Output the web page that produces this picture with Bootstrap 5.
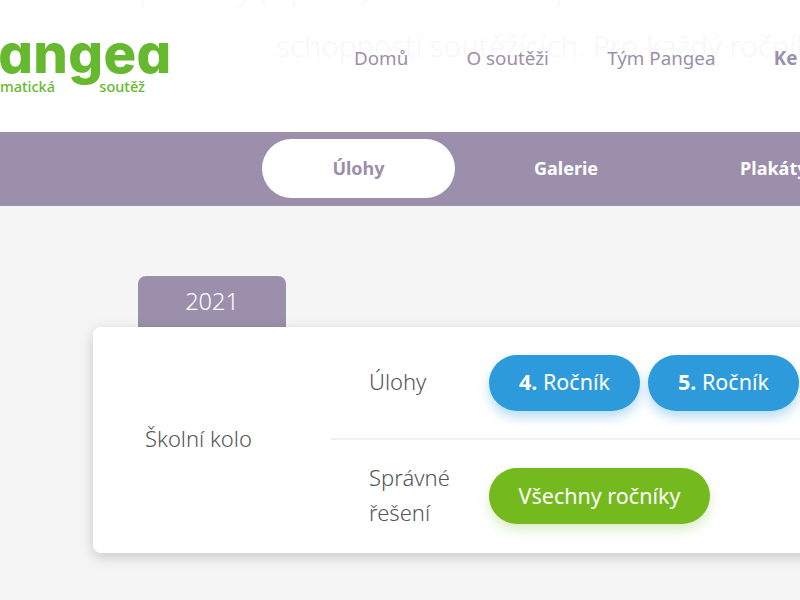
<!DOCTYPE html>
<html lang="cs">
<head>
<meta charset="utf-8">
<title>Pangea</title>
<link href="https://cdn.jsdelivr.net/npm/bootstrap@5.3.0/dist/css/bootstrap.min.css" rel="stylesheet">
<style>
html,body{height:600px;overflow:hidden}
body{background:#f5f5f6;font-family:"Noto Sans","Open Sans",sans-serif;color:#555}
.top-strip{height:131.5px;background:#fff;position:relative;overflow:hidden}
.ghost-line{position:absolute;white-space:nowrap;color:#f7f7f9;font-size:29.5px;font-weight:300;font-family:"Noto Sans",sans-serif}
.ghost-a{left:276px;top:24px}
.ghost-b{left:140px;top:-33px}
.logo-box{position:relative;margin-left:-37px;width:208px;flex:none;height:120px}
.logo-word{position:absolute;top:16px;left:0;font-family:Inter,sans-serif;font-feature-settings:"cv11";font-weight:800;font-size:54.5px;line-height:74px;color:#66b82f;letter-spacing:.3px}
.logo-sub{position:absolute;top:77px;left:37px;width:145px;display:flex;justify-content:space-between;font-size:14.5px;line-height:18px;font-weight:500;color:#66b82f;white-space:nowrap}
.menu-link{color:#9b8fab;font-size:18.8px;line-height:24px;text-decoration:none;white-space:nowrap}
.menu-strong{font-weight:700}
.menu-row{position:relative;z-index:1;gap:58.3px;padding-left:183px;padding-top:46px}
.purple-bar{height:74px;background:#9b8fab;padding-left:262px;gap:79px;white-space:nowrap}
.bar-pill{flex:none;width:193px;height:59px;background:#fff;color:#9b8fab;border-radius:30px;font-weight:700;font-size:18px;text-decoration:none}
.bar-link{color:#fff;font-weight:700;font-size:18px;text-decoration:none}
.bar-far{margin-left:63px}
.year-tab{width:148px;height:51px;margin-left:138px;margin-top:70.5px;background:#9b8fab;color:#fff;border-radius:8px 8px 0 0;font-size:23.5px;font-weight:300}
.panel-box{margin-left:93px;width:780px;height:226px;background:#fff;border-radius:8px;box-shadow:0 4px 14px rgba(0,0,0,.18);position:relative}
.kolo-cell{width:238px;padding-left:52px;padding-bottom:3px;font-size:22px;font-weight:300;flex:none}
.row-a{height:113px;border-bottom:2px solid #f1f1f2}
.row-b{height:113px;padding-bottom:1px}
.label-cell{width:158px;padding-left:38px;padding-bottom:2px;font-size:22px;font-weight:300;line-height:35px;flex:none}
.pill{height:56px;border-radius:28px;color:#fff;font-size:21.5px;white-space:nowrap;text-decoration:none}
.pill-blue{background:#2d9adb;box-shadow:0 6px 12px rgba(45,154,219,.35);width:151px}
.pill-green{background:#74ba1e;box-shadow:0 6px 12px rgba(116,186,30,.25);width:221px}
</style>
</head>
<body>
<header class="top-strip">
  <div class="ghost-line ghost-b">pro žáky (lepších) a soutěžících je zaměřena</div>
  <div class="ghost-line ghost-a">schopnosti soutěžících. Pro každý ročník</div>
  <div class="d-flex">
    <div class="logo-box">
      <div class="logo-word">Pangea</div>
      <div class="logo-sub"><span>matická</span><span>soutěž</span></div>
    </div>
    <nav class="menu-row d-flex">
      <a class="menu-link" href="#">Domů</a>
      <a class="menu-link" href="#">O soutěži</a>
      <a class="menu-link" href="#">Tým Pangea</a>
      <a class="menu-link menu-strong" href="#">Ke stažení</a>
    </nav>
  </div>
</header>
<nav class="purple-bar d-flex align-items-center">
  <a class="bar-pill d-flex align-items-center justify-content-center" href="#">Úlohy</a>
  <a class="bar-link" href="#">Galerie</a>
  <a class="bar-link bar-far" href="#">Plakáty</a>
</nav>
<div class="year-tab d-flex align-items-center justify-content-center">2021</div>
<section class="panel-box d-flex">
  <div class="kolo-cell d-flex align-items-center">Školní kolo</div>
  <div class="flex-grow-1">
    <div class="row-a d-flex align-items-center">
      <div class="label-cell">Úlohy</div>
      <div class="d-flex gap-2">
        <a class="pill pill-blue d-flex align-items-center justify-content-center" href="#"><b>4.</b>&nbsp;Ročník</a>
        <a class="pill pill-blue d-flex align-items-center justify-content-center" href="#"><b>5.</b>&nbsp;Ročník</a>
      </div>
    </div>
    <div class="row-b d-flex align-items-center">
      <div class="label-cell">Správné řešení</div>
      <a class="pill pill-green d-flex align-items-center justify-content-center" href="#">Všechny ročníky</a>
    </div>
  </div>
</section>
<script src="https://cdn.jsdelivr.net/npm/bootstrap@5.3.0/dist/js/bootstrap.bundle.min.js"></script>
</body>
</html>
